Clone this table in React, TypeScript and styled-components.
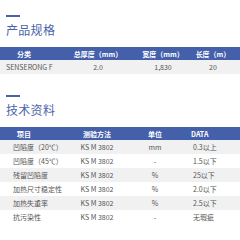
import React from "react";
import styled, { createGlobalStyle } from "styled-components";

const GlobalStyle = createGlobalStyle`
  body {
    margin: 0;
    background: #ffffff;
    font-family: "Noto Sans CJK SC", "Noto Sans", sans-serif;
  }
`;

const Page = styled.div`
  width: 240px;
  height: 240px;
  overflow: hidden;
  background: #ffffff;
`;

const Section = styled.section<{ $top: number }>`
  padding-top: ${({ $top }) => $top}px;
`;

const Dash = styled.div`
  width: 14px;
  height: 2px;
  margin-left: 6px;
  background: #4862ab;
`;

const Title = styled.h2`
  margin: 5px 0 0 6px;
  font-size: 12px;
  line-height: 16px;
  font-weight: 400;
  color: #4a63a8;
  letter-spacing: 0.3px;
`;

const Table = styled.div`
  margin-top: 9px;
  width: 240px;
`;

const HeadRow = styled.div<{ $cols: string }>`
  display: grid;
  grid-template-columns: ${({ $cols }) => $cols};
  height: 13px;
  align-items: center;
  background: #4460aa;
  color: #ffffff;
  font-size: 7px;
  font-weight: 700;
`;

const BodyRow = styled.div<{ $cols: string; $shade: boolean }>`
  display: grid;
  grid-template-columns: ${({ $cols }) => $cols};
  height: 14px;
  align-items: center;
  background: ${({ $shade }) => ($shade ? "#f1f1f2" : "#ffffff")};
  color: #555555;
  font-size: 7px;
`;

const Cell = styled.div<{ $align: string; $pad: number }>`
  text-align: ${({ $align }) => $align};
  padding-left: ${({ $pad }) => $pad}px;
  white-space: nowrap;
  line-height: 10px;
`;

interface ColumnSpec {
  align: string;
  headPad: number;
  bodyPad: number;
}

interface SpecTableProps {
  cols: string;
  spec: ColumnSpec[];
  head: string[];
  rows: string[][];
}

const SpecTable = function({ cols, spec, head, rows }: SpecTableProps) {
  return (
    <Table>
      <HeadRow $cols={cols}>
        {head.map((h, i) => (
          <Cell key={i} $align={i === 0 ? "left" : spec[i].align} $pad={spec[i].headPad}>
            {h}
          </Cell>
        ))}
      </HeadRow>
      {rows.map((row, r) => (
        <BodyRow key={r} $cols={cols} $shade={r % 2 === 0}>
          {row.map((c, i) => (
            <Cell key={i} $align={spec[i].align} $pad={spec[i].bodyPad}>
              {c}
            </Cell>
          ))}
        </BodyRow>
      ))}
    </Table>
  );
};

const productSpec: ColumnSpec[] = [
  { align: "left", headPad: 17, bodyPad: 6 },
  { align: "center", headPad: 0, bodyPad: 0 },
  { align: "center", headPad: 0, bodyPad: 0 },
  { align: "center", headPad: 0, bodyPad: 0 },
];

const techSpec: ColumnSpec[] = [
  { align: "left", headPad: 17, bodyPad: 13 },
  { align: "center", headPad: 0, bodyPad: 0 },
  { align: "center", headPad: 0, bodyPad: 0 },
  { align: "left", headPad: 13, bodyPad: 15 },
];

const techRows = [
  ["凹陷度（20℃）", "KS M 3802", "mm", "0.3以上"],
  ["凹陷度（45℃）", "KS M 3802", "-", "1.5以下"],
  ["残留凹陷度", "KS M 3802", "%", "25以下"],
  ["加热尺寸稳定性", "KS M 3802", "%", "2.0以下"],
  ["加热失重率", "KS M 3802", "%", "2.5以下"],
  ["抗污染性", "KS M 3802", "-", "无瑕疵"],
];

export default function App() {
  return (
    <Page>
      <GlobalStyle />
      <Section $top={15}>
        <Dash />
        <Title>产品规格</Title>
        <SpecTable
          cols="63px 70px 60px 40px 1fr"
          spec={productSpec}
          head={["分类", "总厚度（mm）", "宽度（mm）", "长度（m）"]}
          rows={[["SENSERONG F", "2.0", "1,830", "20"]]}
        />
      </Section>
      <Section $top={21}>
        <Dash />
        <Title>技术资料</Title>
        <SpecTable
          cols="62px 70px 46px 62px"
          spec={techSpec}
          head={["项目", "测验方法", "单位", "DATA"]}
          rows={techRows}
        />
      </Section>
    </Page>
  );
}
